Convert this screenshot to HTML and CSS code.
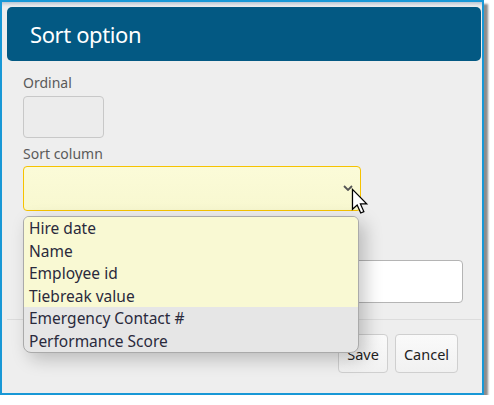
FILE: index.html
```html
<!DOCTYPE html>
<html>
<head>
<meta charset="utf-8">
<link rel="stylesheet" href="styles.css">
</head>
<body>
<div class="window">
  <header class="titlebar"><h1>Sort option</h1></header>
  <div class="form">
    <label class="lbl">Ordinal</label>
    <div class="input ordinal"></div>
    <label class="lbl">Sort column</label>
    <div class="select">
      <svg class="chev" width="10" height="6" viewBox="0 0 10 6"><path d="M1 1 L5 5 L9 1" fill="none" stroke="#555" stroke-width="1.8"/></svg>
    </div>
    <div class="input wide"></div>
  </div>
  <div class="footer">
    <button class="btn save">Save</button>
    <button class="btn cancel">Cancel</button>
  </div>
  <ul class="dropdown">
    <li class="sel">Hire date</li>
    <li class="sel">Name</li>
    <li class="sel">Employee id</li>
    <li class="sel">Tiebreak value</li>
    <li>Emergency Contact #</li>
    <li>Performance Score</li>
  </ul>
  <svg class="cursor" width="20" height="27" viewBox="0 0 14 19"><path d="M1 1 L1 15 L4.3 12 L6.8 17.6 L9 16.6 L6.6 11.2 L11 11.2 Z" fill="#fff" stroke="#000" stroke-width="0.9" stroke-linejoin="miter"/></svg>
</div>
</body>
</html>
```
FILE: styles.css
```css
body {
  margin: 0;
  background: #ffffff;
  font-family: "Noto Sans", "Open Sans", sans-serif;
}
.window {
  position: relative;
  width: 480px;
  height: 391px;
  border: 2px solid #1898d6;
  background: linear-gradient(to bottom, #b8c6d3 0px, #dfe3e7 3px, #eeeeee 5px) #eeeeee;
  box-shadow: 4px 4px 2px rgba(0, 0, 0, 0.45);
  display: flex;
  flex-direction: column;
}
.titlebar {
  margin: 5px 1px 0 5px;
  height: 54px;
  background: #035983;
  border-radius: 5px;
}
.titlebar h1 {
  margin: 0;
  padding-left: 23px;
  line-height: 54px;
  font-size: 22px;
  font-weight: 400;
  letter-spacing: -0.4px;
  color: #ffffff;
}
.form {
  display: flex;
  flex-direction: column;
  align-items: flex-start;
  padding: 0 21px;
}
.lbl {
  display: block;
  font-size: 14px;
  line-height: 20px;
  color: #5a5a5a;
  margin-top: 12px;
}
.input {
  box-sizing: border-box;
  border: 1px solid #c8c8c8;
  border-radius: 4px;
}
.ordinal {
  width: 81px;
  height: 42px;
  margin-top: 3px;
  background: #ececec;
}
.ordinal + .lbl { margin-top: 6px; }
.select {
  box-sizing: border-box;
  width: 338px;
  height: 45px;
  margin-top: 2px;
  border: 1px solid #f6c200;
  border-radius: 4px;
  background: linear-gradient(to bottom, #fbfbd8, #f8f8d0);
  display: flex;
  align-items: center;
  justify-content: flex-end;
  padding-right: 7px;
}
.chev { margin-top: -2px; }
.wide {
  width: 440px;
  height: 43px;
  margin-top: 49px;
  background: #ffffff;
  border-color: #b4b4b4;
}
.footer {
  margin: 16px 1px 0 5px;
  border-top: 1px solid #dcdcdc;
  padding: 14px 23px 0 0;
  display: flex;
  justify-content: flex-end;
  gap: 7px;
}
.btn {
  box-sizing: border-box;
  height: 39px;
  border: 1px solid #cfcfcf;
  border-radius: 4px;
  background: linear-gradient(to bottom, #fafafa, #f1f1f1);
  font-family: "Noto Sans", "Open Sans", sans-serif;
  font-size: 14.5px;
  color: #222;
  padding: 0;
}
.save { width: 50px; }
.cancel { width: 63px; }
.dropdown {
  position: absolute;
  left: 21px;
  top: 214px;
  box-sizing: border-box;
  width: 336px;
  height: 137px;
  margin: 0;
  padding: 0;
  list-style: none;
  border: 1px solid #aaaaaa;
  border-radius: 6px 6px 8px 8px;
  background: #e6e6e6;
  overflow: hidden;
  box-shadow: 6px 6px 18px rgba(0, 0, 0, 0.22);
}
.dropdown li {
  height: 22.5px;
  line-height: 22.5px;
  padding-left: 5px;
  font-size: 15.5px;
  color: #2a2a3c;
  white-space: nowrap;
}
.dropdown li.sel { background: #f9f9d3; }
.cursor {
  position: absolute;
  left: 349px;
  top: 186px;
}
```
